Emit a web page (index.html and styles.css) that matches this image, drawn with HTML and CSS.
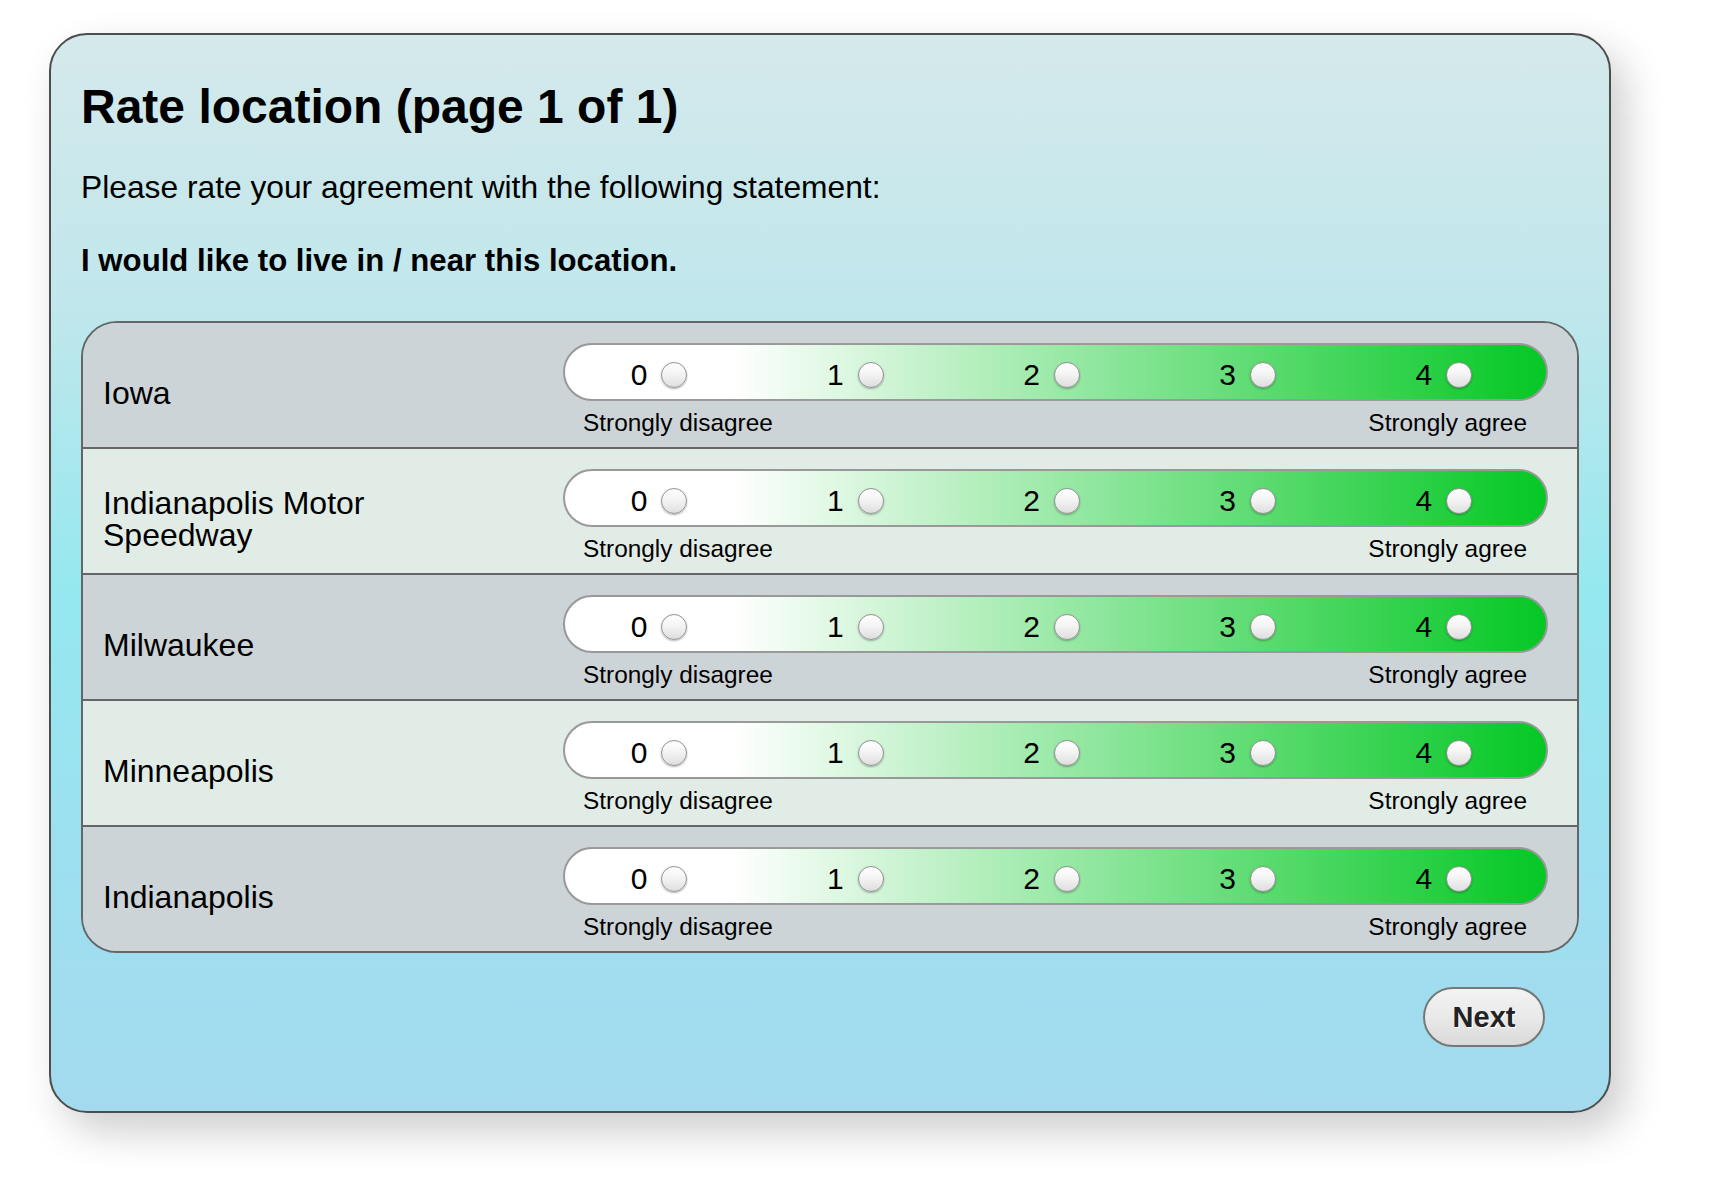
FILE: index.html
```html
<!DOCTYPE html>
<html>
<head>
<meta charset="utf-8">
<title>Rate location</title>
<link rel="stylesheet" href="styles.css">
</head>
<body>
<div class="page">
  <div class="card">
    <h1 class="title">Rate location (page 1 of 1)</h1>
    <p class="prompt">Please rate your agreement with the following statement:</p>
    <p class="statement">I would like to live in / near this location.</p>
    <div class="table">
      <div class="row odd">
        <div class="name">Iowa</div>
        <div class="scale">
          <div class="pill">
            <label class="opt"><span class="num">0</span><span class="radio"></span></label>
            <label class="opt"><span class="num">1</span><span class="radio"></span></label>
            <label class="opt"><span class="num">2</span><span class="radio"></span></label>
            <label class="opt"><span class="num">3</span><span class="radio"></span></label>
            <label class="opt"><span class="num">4</span><span class="radio"></span></label>
          </div>
          <div class="labels"><span>Strongly disagree</span><span>Strongly agree</span></div>
        </div>
      </div>
      <div class="row even">
        <div class="name">Indianapolis Motor Speedway</div>
        <div class="scale">
          <div class="pill">
            <label class="opt"><span class="num">0</span><span class="radio"></span></label>
            <label class="opt"><span class="num">1</span><span class="radio"></span></label>
            <label class="opt"><span class="num">2</span><span class="radio"></span></label>
            <label class="opt"><span class="num">3</span><span class="radio"></span></label>
            <label class="opt"><span class="num">4</span><span class="radio"></span></label>
          </div>
          <div class="labels"><span>Strongly disagree</span><span>Strongly agree</span></div>
        </div>
      </div>
      <div class="row odd">
        <div class="name">Milwaukee</div>
        <div class="scale">
          <div class="pill">
            <label class="opt"><span class="num">0</span><span class="radio"></span></label>
            <label class="opt"><span class="num">1</span><span class="radio"></span></label>
            <label class="opt"><span class="num">2</span><span class="radio"></span></label>
            <label class="opt"><span class="num">3</span><span class="radio"></span></label>
            <label class="opt"><span class="num">4</span><span class="radio"></span></label>
          </div>
          <div class="labels"><span>Strongly disagree</span><span>Strongly agree</span></div>
        </div>
      </div>
      <div class="row even">
        <div class="name">Minneapolis</div>
        <div class="scale">
          <div class="pill">
            <label class="opt"><span class="num">0</span><span class="radio"></span></label>
            <label class="opt"><span class="num">1</span><span class="radio"></span></label>
            <label class="opt"><span class="num">2</span><span class="radio"></span></label>
            <label class="opt"><span class="num">3</span><span class="radio"></span></label>
            <label class="opt"><span class="num">4</span><span class="radio"></span></label>
          </div>
          <div class="labels"><span>Strongly disagree</span><span>Strongly agree</span></div>
        </div>
      </div>
      <div class="row odd">
        <div class="name">Indianapolis</div>
        <div class="scale">
          <div class="pill">
            <label class="opt"><span class="num">0</span><span class="radio"></span></label>
            <label class="opt"><span class="num">1</span><span class="radio"></span></label>
            <label class="opt"><span class="num">2</span><span class="radio"></span></label>
            <label class="opt"><span class="num">3</span><span class="radio"></span></label>
            <label class="opt"><span class="num">4</span><span class="radio"></span></label>
          </div>
          <div class="labels"><span>Strongly disagree</span><span>Strongly agree</span></div>
        </div>
      </div>
    </div>
    <div class="footer"><button class="next" type="button">Next</button></div>
  </div>
</div>
</body>
</html>
```
FILE: styles.css
```css
body {
  margin: 0;
  background: #ffffff;
  font-family: "Liberation Sans", Helvetica, Arial, sans-serif;
  color: #000;
}

.page {
  padding: 33px 0 80px 49px;
}

.card {
  box-sizing: border-box;
  width: 1562px;
  border: 2px solid #4d4d4d;
  border-radius: 38px;
  background: linear-gradient(to bottom, #d5e9eb 0%, #c0e7ec 25%, #95e8ef 52%, #9ddff0 78%, #a3daee 100%);
  box-shadow: 14px 18px 40px rgba(0, 0, 0, 0.2);
  padding: 44px 30px 64px 30px;
}

.title {
  margin: 0;
  font-size: 48px;
  line-height: 56px;
  font-weight: bold;
}

.prompt {
  margin: 34px 0 0;
  font-size: 31.75px;
  line-height: 36px;
}

.statement {
  margin: 38px 0 0;
  font-size: 31.2px;
  line-height: 36px;
  font-weight: bold;
}

.table {
  margin-top: 42px;
  border: 2px solid #666;
  border-radius: 36px;
  overflow: hidden;
}

.row {
  display: grid;
  grid-template-columns: 480px 985px;
  height: 124px;
}

.row + .row {
  border-top: 2px solid #666;
}

.row.odd {
  background: #ccd4d7;
}

.row.even {
  background: #e2ece7;
}

.name {
  align-self: center;
  padding: 16px 150px 0 20px;
  font-size: 32px;
  line-height: 32px;
}

.scale {
  padding-top: 20px;
}

.pill {
  box-sizing: border-box;
  height: 58px;
  border: 2px solid #999;
  border-radius: 29px;
  background: linear-gradient(to right, #ffffff 17%, #04c824 100%);
  display: grid;
  grid-template-columns: repeat(5, 1fr);
  align-items: center;
  padding-top: 6px;
}

.opt {
  display: flex;
  justify-content: center;
  align-items: center;
  gap: 14px;
  padding-right: 8px;
}

.num {
  font-size: 30px;
  line-height: 30px;
}

.radio {
  box-sizing: border-box;
  width: 26px;
  height: 26px;
  border-radius: 50%;
  border: 1px solid #939393;
  background: linear-gradient(to bottom, #ffffff 0%, #f4f4f4 45%, #dedede 100%);
  box-shadow: 0 1px 2px rgba(0, 0, 0, 0.3);
}

.labels {
  display: flex;
  justify-content: space-between;
  padding: 8px 21px 0 20px;
  font-size: 24.4px;
  line-height: 28px;
}

.footer {
  display: flex;
  justify-content: flex-end;
  margin-top: 34px;
  padding-right: 34px;
}

.next {
  box-sizing: border-box;
  width: 122px;
  height: 60px;
  padding: 0;
  border: 2px solid #777;
  border-radius: 30px;
  background: linear-gradient(to bottom, #f3f3f3 0%, #e9e9e9 50%, #dadada 100%);
  font-family: "Liberation Sans", Helvetica, Arial, sans-serif;
  font-weight: bold;
  font-size: 29px;
  color: #222;
  text-shadow: 1px 1px 0 #fff;
}
```
